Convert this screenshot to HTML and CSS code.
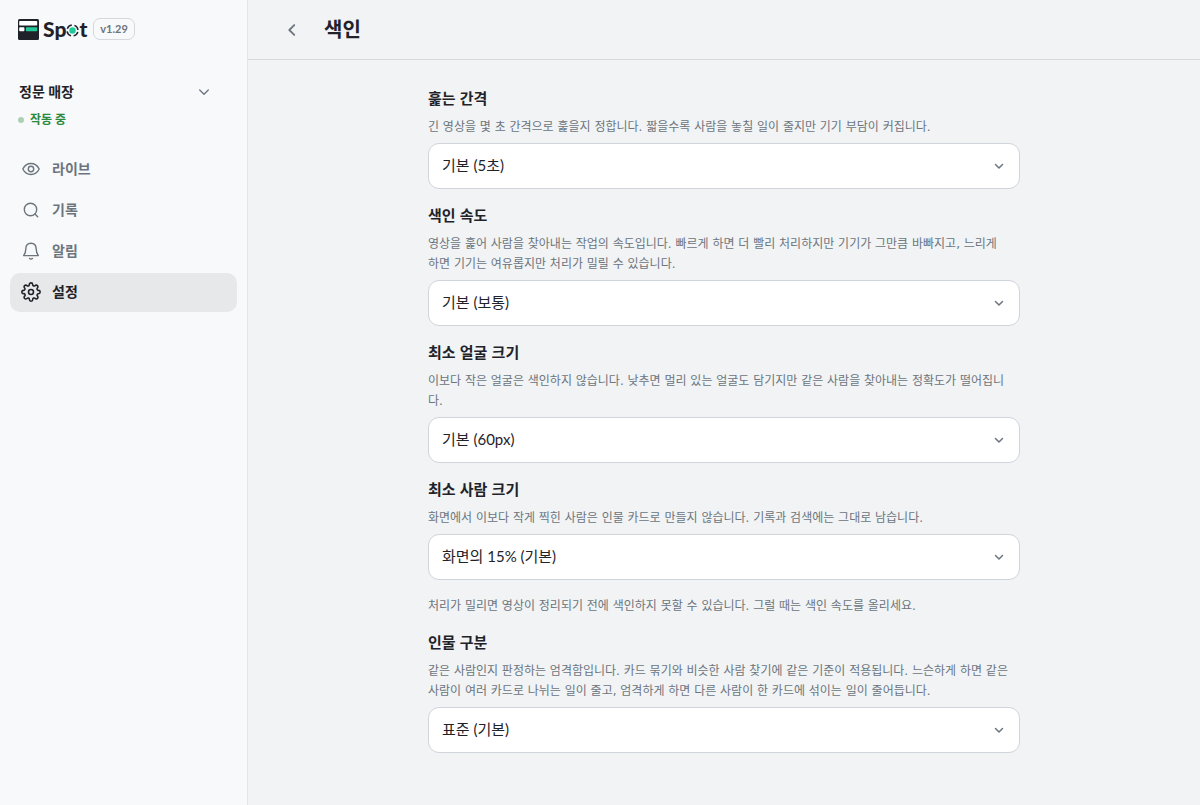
FILE: index.html
```html
<!DOCTYPE html>
<html lang="ko">
<head>
    <meta charset="UTF-8">
    <meta name="viewport" content="width=device-width, initial-scale=1.0">
    <title>Spot - 색인</title>
    <link rel="stylesheet" href="styles.css">
</head>
<body>
    <!-- Chevron shared by all selects -->
    <svg class="sprite" aria-hidden="true">
        <symbol id="chevron-down" viewBox="0 0 14 14">
            <path d="M3.500 5.500L7 9l3.500-3.500" fill="none" stroke="currentColor" stroke-width="1.5" stroke-linecap="round" stroke-linejoin="round"/>
        </symbol>
    </svg>

    <div class="app">
        <aside class="sidebar">
            <div class="brand">
                <svg class="brand-mark" viewBox="0 0 21 21" aria-hidden="true">
                    <rect width="21" height="21" rx="1.5" fill="#1f2329"/>
                    <rect x="1.2" y="2" width="18" height="4.600" rx="0.8" fill="#fff"/>
                    <rect x="1.2" y="8.200" width="5.200" height="4" rx="0.8" fill="#fff"/>
                    <rect x="7.900" y="8.200" width="11.300" height="4" rx="0.8" fill="#20c997"/>
                </svg>
                <span class="brand-name">Sp<svg class="brand-dot" viewBox="0 0 14 14" aria-label="o">
                    <circle cx="7" cy="7" r="5.900" fill="none" stroke="#1f2329" stroke-width="1.6" stroke-dasharray="6.300 2.970" stroke-dashoffset="-1.480"/>
                    <circle cx="7" cy="7" r="3.500" fill="#20c997"/>
                </svg>t</span>
                <span class="version">v1.29</span>
            </div>

            <button type="button" class="store">
                <span>정문 매장</span>
                <svg class="store-chevron" viewBox="0 0 14 14" aria-hidden="true"><path d="M2.700 5L7 9.300 11.300 5"/></svg>
            </button>
            <div class="status"><span class="status-dot"></span>작동 중</div>

            <nav class="nav">
                <a class="nav-item" href="#live">
                    <svg class="nav-icon" viewBox="0 0 20 20" aria-hidden="true">
                        <path d="M1.800 10C3.600 6.500 6.500 4.500 10 4.500s6.400 2 8.200 5.500c-1.800 3.500-4.700 5.500-8.200 5.500S3.600 13.500 1.800 10z"/>
                        <circle cx="10" cy="10" r="2.700"/>
                    </svg>
                    라이브
                </a>
                <a class="nav-item" href="#records">
                    <svg class="nav-icon" viewBox="0 0 20 20" aria-hidden="true">
                        <circle cx="9.500" cy="9.500" r="6.200"/>
                        <path d="M14 14l2.700 2.700"/>
                    </svg>
                    기록
                </a>
                <a class="nav-item" href="#alerts">
                    <svg class="nav-icon" viewBox="0 0 20 20" aria-hidden="true">
                        <path d="M2.600 14.600h14.800c-1.500-1.700-2.200-3.200-2.200-6.600 0-3.500-2-5.800-5.200-5.800S4.800 4.500 4.800 8c0 3.400-.7 4.900-2.200 6.600z"/>
                        <path d="M8.500 17.400c.8.9 2.200.9 3 0"/>
                    </svg>
                    알림
                </a>
                <a class="nav-item active" href="#settings" aria-current="page">
                    <svg class="nav-icon" viewBox="0 0 24 24" aria-hidden="true">
                        <circle cx="12" cy="12" r="3"/>
                        <path d="M19.400 15a1.650 1.650 0 0 0 .33 1.820l.06.06a2 2 0 1 1-2.830 2.830l-.06-.06a1.650 1.650 0 0 0-2.800 1.170V21a2 2 0 0 1-4 0v-.09a1.650 1.650 0 0 0-2.900-1.170l-.06.06a2 2 0 1 1-2.830-2.830l.06-.06A1.650 1.650 0 0 0 3.090 14H3a2 2 0 0 1 0-4h.09a1.650 1.650 0 0 0 1.280-2.800l-.06-.06a2 2 0 1 1 2.830-2.830l.06.06A1.650 1.650 0 0 0 10 3.090V3a2 2 0 0 1 4 0v.09a1.650 1.650 0 0 0 2.800 1.280l.06-.06a2 2 0 1 1 2.830 2.830l-.06.06A1.650 1.650 0 0 0 20.910 10H21a2 2 0 0 1 0 4h-.09a1.650 1.650 0 0 0-1.510 1z"/>
                    </svg>
                    설정
                </a>
            </nav>
        </aside>

        <main class="main">
            <header class="topbar">
                <button type="button" class="back" aria-label="뒤로">
                    <svg class="back-icon" viewBox="0 0 20 20" aria-hidden="true"><path d="M12.500 4.500L7 10l5.500 5.500"/></svg>
                </button>
                <h1>색인</h1>
            </header>

            <form class="settings">
                <div class="field">
                    <label for="interval">훑는 간격</label>
                    <p>긴 영상을 몇 초 간격으로 훑을지 정합니다. 짧을수록 사람을 놓칠 일이 줄지만 기기 부담이 커집니다.</p>
                    <div class="select">
                        <select id="interval"><option>기본 (5초)</option></select>
                        <svg aria-hidden="true"><use href="#chevron-down"/></svg>
                    </div>
                </div>

                <div class="field">
                    <label for="speed">색인 속도</label>
                    <p>영상을 훑어 사람을 찾아내는 작업의 속도입니다. 빠르게 하면 더 빨리 처리하지만 기기가 그만큼 바빠지고, 느리게 하면 기기는 여유롭지만 처리가 밀릴 수 있습니다.</p>
                    <div class="select">
                        <select id="speed"><option>기본 (보통)</option></select>
                        <svg aria-hidden="true"><use href="#chevron-down"/></svg>
                    </div>
                </div>

                <div class="field">
                    <label for="face">최소 얼굴 크기</label>
                    <p>이보다 작은 얼굴은 색인하지 않습니다. 낮추면 멀리 있는 얼굴도 담기지만 같은 사람을 찾아내는 정확도가 떨어집니다.</p>
                    <div class="select">
                        <select id="face"><option>기본 (60px)</option></select>
                        <svg aria-hidden="true"><use href="#chevron-down"/></svg>
                    </div>
                </div>

                <div class="field">
                    <label for="person">최소 사람 크기</label>
                    <p>화면에서 이보다 작게 찍힌 사람은 인물 카드로 만들지 않습니다. 기록과 검색에는 그대로 남습니다.</p>
                    <div class="select">
                        <select id="person"><option>화면의 15% (기본)</option></select>
                        <svg aria-hidden="true"><use href="#chevron-down"/></svg>
                    </div>
                </div>

                <p class="note">처리가 밀리면 영상이 정리되기 전에 색인하지 못할 수 있습니다. 그럴 때는 색인 속도를 올리세요.</p>

                <div class="field">
                    <label for="match">인물 구분</label>
                    <p>같은 사람인지 판정하는 엄격함입니다. 카드 묶기와 비슷한 사람 찾기에 같은 기준이 적용됩니다. 느슨하게 하면 같은 사람이 여러 카드로 나뉘는 일이 줄고, 엄격하게 하면 다른 사람이 한 카드에 섞이는 일이 줄어듭니다.</p>
                    <div class="select">
                        <select id="match"><option>표준 (기본)</option></select>
                        <svg aria-hidden="true"><use href="#chevron-down"/></svg>
                    </div>
                </div>
            </form>
        </main>
    </div>
</body>
</html>
```

FILE: styles.css
```css
* {
    box-sizing: border-box;
}

body {
    margin: 0;
    background: #f1f3f5;
    color: #1f2329;
    font-family: Lato, "Noto Sans CJK KR", sans-serif;
    font-size: 15px;
}

h1,
p {
    margin: 0;
}

button,
select {
    font: inherit;
    color: inherit;
}

.sprite {
    position: absolute;
    width: 0;
    height: 0;
}

.app {
    display: flex;
    min-height: 100vh;
}

/* Sidebar */
.sidebar {
    width: 248px;
    flex-shrink: 0;
    padding: 18px 10px;
    background: #f8f9fb;
    border-right: 1px solid #e2e5e9;
}

.brand {
    display: flex;
    align-items: center;
    height: 22px;
    padding-left: 8px;
}

.brand-mark {
    width: 21px;
    height: 21px;
    margin-right: 4px;
}

.brand-name {
    display: flex;
    align-items: center;
    font-size: 21px;
    font-weight: 900;
    line-height: 24px;
}

.brand-dot {
    width: 13px;
    height: 13px;
    margin-top: 3px;
}

.version {
    margin-left: 6px;
    padding: 0 6px;
    border: 1px solid #d5d9de;
    border-radius: 7px;
    color: #6c757d;
    font-size: 11px;
    font-weight: 700;
    line-height: 20px;
}

.store {
    display: flex;
    align-items: center;
    justify-content: space-between;
    width: 100%;
    margin-top: 40px;
    padding: 0 26px 0 9px;
    border: 0;
    background: none;
    font-size: 14px;
    font-weight: 700;
    line-height: 24px;
}

.store-chevron {
    width: 14px;
    height: 14px;
    fill: none;
    stroke: #6c757d;
    stroke-width: 1.3;
    stroke-linecap: round;
    stroke-linejoin: round;
}

.status {
    display: flex;
    align-items: center;
    gap: 6px;
    margin-top: 6px;
    padding-left: 8px;
    color: #2b8a3e;
    font-size: 12px;
    font-weight: 700;
    line-height: 20px;
}

.status-dot {
    width: 6px;
    height: 6px;
    border-radius: 50%;
    background: #abd0b4;
}

.nav {
    display: flex;
    flex-direction: column;
    gap: 2px;
    margin-top: 20px;
}

.nav-item {
    display: flex;
    align-items: center;
    gap: 11px;
    height: 39px;
    padding: 0 11px 1px;
    border-radius: 10px;
    color: #6c757d;
    font-size: 14px;
    font-weight: 700;
    line-height: 20px;
    text-decoration: none;
}

.nav-item.active {
    background: #e6e8ea;
    color: #1f2329;
}

.nav-icon {
    width: 20px;
    height: 20px;
    fill: none;
    stroke: currentColor;
    stroke-width: 1.4;
    stroke-linecap: round;
    stroke-linejoin: round;
}

.active .nav-icon {
    stroke-width: 1.9;
}

/* Main column */
.main {
    flex: 1;
    min-width: 0;
}

.topbar {
    display: flex;
    align-items: center;
    gap: 16px;
    height: 60px;
    padding-left: 28px;
    border-bottom: 1px solid #d5d9de;
}

.back {
    display: flex;
    align-items: center;
    justify-content: center;
    width: 32px;
    height: 32px;
    padding: 0;
    border: 0;
    background: none;
    color: #6c757d;
}

.back-icon {
    width: 18px;
    height: 18px;
    fill: none;
    stroke: currentColor;
    stroke-width: 2;
    stroke-linecap: round;
    stroke-linejoin: round;
}

h1 {
    padding-bottom: 2px;
    font-size: 20px;
    font-weight: 700;
    line-height: 28px;
}

.settings {
    display: flex;
    flex-direction: column;
    gap: 14px;
    max-width: 592px;
    margin: 0 auto;
    padding: 26px 0 50px;
}

.field label {
    display: block;
    font-family: "Noto Sans CJK KR", sans-serif;
    font-weight: 700;
    line-height: 24px;
}

.field p,
.note {
    color: #6c757d;
    font-family: "DejaVu Sans", "Noto Sans CJK KR", sans-serif;
    font-size: 12px;
    line-height: 20px;
}

.field p {
    margin: 7px 0 6px;
    padding-right: 10px;
}

.note {
    padding: 2px 0 0;
}

.select {
    position: relative;
}

.select select {
    display: block;
    width: 100%;
    height: 46px;
    padding: 0 40px 2px 13px;
    border: 1px solid #d0d5dc;
    border-radius: 11px;
    background: #fff;
    appearance: none;
}

.select svg {
    position: absolute;
    top: 16px;
    right: 14px;
    width: 14px;
    height: 14px;
    color: #6c757d;
    pointer-events: none;
}
```
